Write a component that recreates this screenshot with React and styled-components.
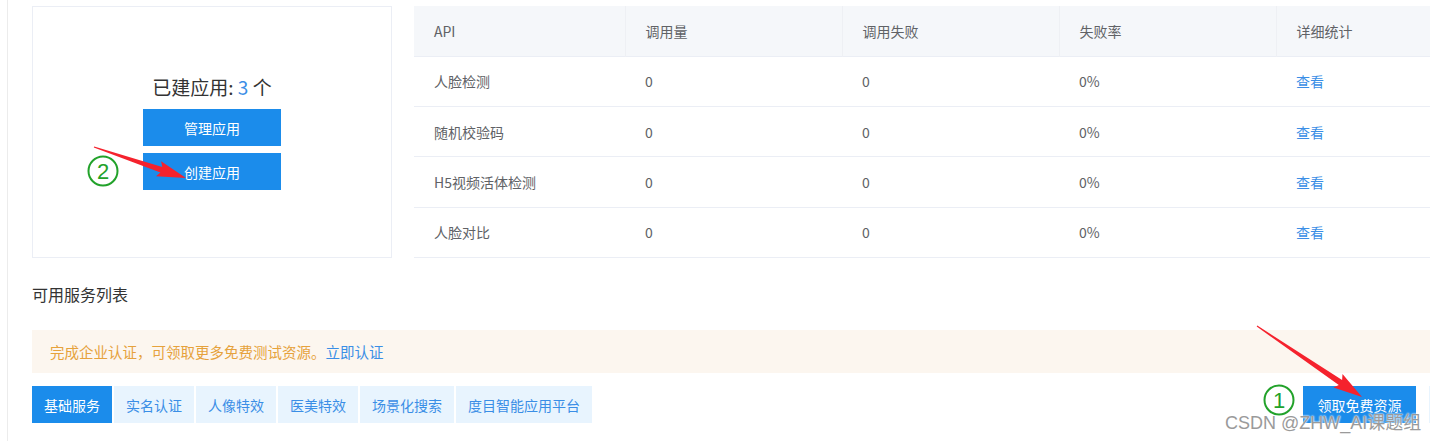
import React from 'react';
import styled, { createGlobalStyle } from 'styled-components';

const COLORS = {
  blue: '#1b8ceb',
  link: '#3a8ee6',
  text: '#606266',
  title: '#333333',
  line: '#ebeef5',
  headBg: '#f5f7fa',
  warnBg: '#fcf6ef',
  warnText: '#e6a23c',
  tabBg: '#e8f4fe',
  green: '#22a22a',
  red: '#f5222d',
};

const GlobalStyle = createGlobalStyle`
  body {
    margin: 0;
    background: #fff;
    font-family: "Noto Sans CJK SC", "Noto Sans", sans-serif;
    color: ${COLORS.text};
  }
`;

const Page = styled.div`
  position: relative;
  width: 1437px;
  height: 441px;
  overflow: hidden;
  padding-left: 7px;
  box-sizing: border-box;
`;

const Main = styled.div`
  border-left: 1px solid #ececec;
  height: 100%;
  padding: 6px 7px 0 24px;
  box-sizing: border-box;
`;

const TopRow = styled.div`
  display: flex;
  gap: 22px;
  height: 252px;
`;

// app count card
const AppCard = styled.div`
  width: 360px;
  flex: none;
  border: 1px solid ${COLORS.line};
  box-sizing: border-box;
  display: flex;
  flex-direction: column;
  align-items: center;
  justify-content: center;
  gap: 7px;
`;

const AppCount = styled.div`
  font-size: 19px;
  line-height: 26px;
  color: ${COLORS.title};
  margin-bottom: 2px;
  b {
    font-weight: 400;
    color: ${COLORS.link};
  }
`;

const BlueButton = styled.button`
  border: none;
  background: ${COLORS.blue};
  color: #fff;
  font-family: inherit;
  font-size: 14px;
  width: ${({ w }) => w || 138}px;
  height: 37px;
  padding: 0;
  cursor: pointer;
`;

// stats table
const Table = styled.table`
  width: 1016px;
  flex: none;
  border-collapse: collapse;
  font-size: 14px;
  table-layout: fixed;
  height: 252px;
  border-bottom: 1px solid ${COLORS.line};
`;

const Th = styled.th`
  background: ${COLORS.headBg};
  font-weight: 400;
  text-align: left;
  color: ${COLORS.text};
  padding: 0 0 0 20px;
  height: 50px;
  box-sizing: border-box;
  white-space: nowrap;
  border-right: 1px solid #eef0f4;
  &:last-child {
    border-right: none;
  }
`;

const Td = styled.td`
  padding: 0 0 0 20px;
  height: 50px;
  box-sizing: border-box;
  border-top: 1px solid ${COLORS.line};
  color: ${({ link }) => (link ? COLORS.link : COLORS.text)};
`;

const SectionTitle = styled.div`
  font-size: 16px;
  line-height: 22px;
  color: ${COLORS.title};
  margin-top: 25px;
`;

const Notice = styled.div`
  margin-top: 25px;
  height: 43px;
  background: ${COLORS.warnBg};
  display: flex;
  align-items: center;
  padding-left: 18px;
  font-size: 14.5px;
  color: ${COLORS.warnText};
  a {
    color: ${COLORS.link};
    text-decoration: none;
  }
`;

const TabRow = styled.div`
  margin-top: 13px;
  display: flex;
  align-items: center;
`;

const Tabs = styled.div`
  display: flex;
  gap: 2px;
  flex: 1;
`;

const Tab = styled.div`
  height: 37px;
  display: flex;
  align-items: center;
  padding: 0 12px;
  font-size: 14px;
  background: ${({ active }) => (active ? COLORS.blue : COLORS.tabBg)};
  color: ${({ active }) => (active ? '#fff' : COLORS.link)};
`;

const EdgeStub = styled.div`
  width: 1px;
  height: 37px;
  margin-left: 13px;
  background: ${COLORS.tabBg};
`;

// annotation layer (arrows, circled numbers)
const Overlay = styled.svg`
  position: absolute;
  left: 0;
  top: 0;
  pointer-events: none;
`;

const Watermark = styled.div`
  position: absolute;
  left: 1225px;
  top: 408px;
  font-family: "Liberation Sans", "Noto Sans CJK SC", sans-serif;
  font-size: 18px;
  color: #9a9a9a;
  text-shadow: 0 0 2px #fff, 0 0 2px #fff;
  white-space: nowrap;
`;

const arrowPoints = (x1, y1, x2, y2) => {
  const dx = x2 - x1;
  const dy = y2 - y1;
  const len = Math.hypot(dx, dy);
  const ux = dx / len;
  const uy = dy / len;
  const nx = -uy;
  const ny = ux;
  const headLen = 26;
  const neckX = x2 - ux * headLen;
  const neckY = y2 - uy * headLen;
  const p = (x, y) => `${x.toFixed(1)},${y.toFixed(1)}`;
  return [
    p(x1 + nx * 0.6, y1 + ny * 0.6),
    p(neckX + nx * 3, neckY + ny * 3),
    p(neckX - ux * 3 + nx * 8, neckY - uy * 3 + ny * 8),
    p(x2, y2),
    p(neckX - ux * 3 - nx * 8, neckY - uy * 3 - ny * 8),
    p(neckX - nx * 3, neckY - ny * 3),
    p(x1 - nx * 0.6, y1 - ny * 0.6),
  ].join(' ');
};

const CircledNumber = ({ cx, cy, n }) => (
  <g>
    <circle cx={cx} cy={cy} r="14.5" fill="none" stroke={COLORS.green} strokeWidth="2" />
    <text
      x={cx}
      y={cy + 8}
      textAnchor="middle"
      fontSize="22"
      fontFamily="Liberation Sans, sans-serif"
      fill={COLORS.green}
    >
      {n}
    </text>
  </g>
);

const columns = [
  { title: 'API', width: 211 },
  { title: '调用量', width: 217 },
  { title: '调用失败', width: 217 },
  { title: '失败率', width: 217 },
  { title: '详细统计', width: 154 },
];

const rows = ['人脸检测', '随机校验码', 'H5视频活体检测', '人脸对比'];

const tabs = ['基础服务', '实名认证', '人像特效', '医美特效', '场景化搜索', '度目智能应用平台'];

export default function App() {
  return (
    <>
      <GlobalStyle />
      <Page>
        <Main>
          <TopRow>
            <AppCard>
              <AppCount>
                已建应用: <b>3</b> 个
              </AppCount>
              <BlueButton>管理应用</BlueButton>
              <BlueButton>创建应用</BlueButton>
            </AppCard>
            <Table>
              <colgroup>
                {columns.map((c) => (
                  <col key={c.title} style={{ width: c.width }} />
                ))}
              </colgroup>
              <thead>
                <tr>
                  {columns.map((c) => (
                    <Th key={c.title}>{c.title}</Th>
                  ))}
                </tr>
              </thead>
              <tbody>
                {rows.map((api) => (
                  <tr key={api}>
                    <Td>{api}</Td>
                    <Td>0</Td>
                    <Td>0</Td>
                    <Td>0%</Td>
                    <Td link>查看</Td>
                  </tr>
                ))}
              </tbody>
            </Table>
          </TopRow>

          <SectionTitle>可用服务列表</SectionTitle>

          <Notice>
            完成企业认证，可领取更多免费测试资源。<a href="#">立即认证</a>
          </Notice>

          <TabRow>
            <Tabs>
              {tabs.map((t, i) => (
                <Tab key={t} active={i === 0}>
                  {t}
                </Tab>
              ))}
            </Tabs>
            <BlueButton w={113}>领取免费资源</BlueButton>
            <EdgeStub />
          </TabRow>
        </Main>

        <Overlay width="1437" height="441" viewBox="0 0 1437 441">
          <polygon points={arrowPoints(94, 147, 186, 178)} fill={COLORS.red} />
          <polygon points={arrowPoints(1257, 326, 1362, 397)} fill={COLORS.red} />
          <CircledNumber cx={103} cy={171} n="2" />
          <CircledNumber cx={1279} cy={400} n="1" />
        </Overlay>
        <Watermark>CSDN @ZHW_AI课题组</Watermark>
      </Page>
    </>
  );
}
